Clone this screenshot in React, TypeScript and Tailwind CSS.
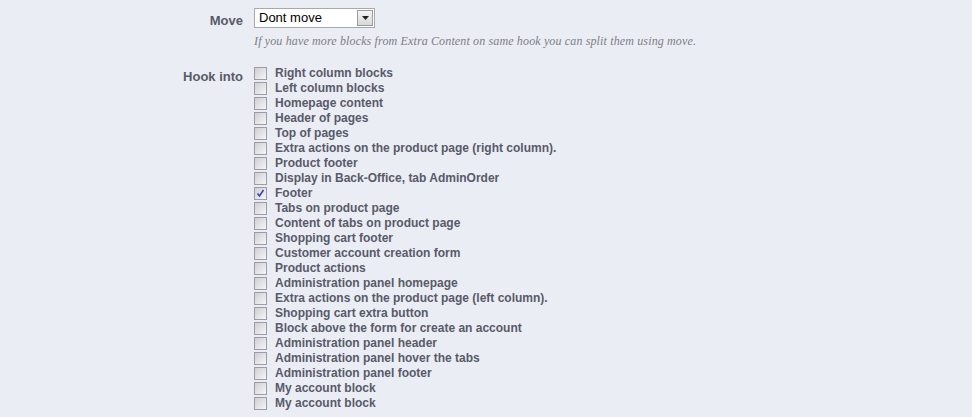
const hooks = [
  "Right column blocks",
  "Left column blocks",
  "Homepage content",
  "Header of pages",
  "Top of pages",
  "Extra actions on the product page (right column).",
  "Product footer",
  "Display in Back-Office, tab AdminOrder",
  "Footer",
  "Tabs on product page",
  "Content of tabs on product page",
  "Shopping cart footer",
  "Customer account creation form",
  "Product actions",
  "Administration panel homepage",
  "Extra actions on the product page (left column).",
  "Shopping cart extra button",
  "Block above the form for create an account",
  "Administration panel header",
  "Administration panel hover the tabs",
  "Administration panel footer",
  "My account block",
  "My account block",
];

const Box = ({ checked }: { checked: boolean }) => (
  <span className="w-[13px] h-[13px] border border-[#9c9ca6] bg-gradient-to-br from-[#cfcfd4] to-[#f6f6f6] flex items-center justify-center shrink-0">
    {checked && (
      <svg width="9" height="9" viewBox="0 0 9 9">
        <path d="M1.5 4.5 L3.5 7 L7.5 1" stroke="#3a3ab8" strokeWidth="1.5" fill="none" />
      </svg>
    )}
  </span>
);

export default function App() {
  return (
    <div className="w-[972px] h-[417px] bg-[#ebedf4] font-['Liberation_Sans',Arial,sans-serif] text-[#585a69] overflow-hidden">
      <div className="flex pt-2">
        <div className="w-[243px] text-right font-bold text-[13px] leading-5 pt-[3px]">Move</div>
        <div className="ml-[11px]">
          <div className="w-[121px] h-[20px] border border-[#a8a8b0] bg-white flex items-center justify-between pl-[4px] pr-[1px]">
            <span className="text-[13px] text-black leading-4">Dont move</span>
            <span className="w-[16px] h-[16px] border border-[#9a9aa0] bg-gradient-to-b from-[#f4f4f4] to-[#d8d8d8] flex items-center justify-center">
              <svg width="7" height="4" viewBox="0 0 7 4"><path d="M0 0 H7 L3.5 4 Z" fill="#222" /></svg>
            </span>
          </div>
          <p className="mt-[5px] italic text-[12px] leading-4 tracking-[0.14px] text-[#7d7d86] font-['Liberation_Serif',Georgia,serif]">
            If you have more blocks from Extra Content on same hook you can split them using move.
          </p>
        </div>
      </div>
      <div className="flex mt-[17px]">
        <div className="w-[243px] text-right font-bold text-[13px] leading-4 pt-[3px]">Hook into</div>
        <div className="ml-[11px] flex flex-col">
          {hooks.map((h, i) => (
            <label key={i} className="flex items-center h-[15px] gap-[8px]">
              <Box checked={h === "Footer"} />
              <span className="font-bold text-[12px] leading-[15px]">{h}</span>
            </label>
          ))}
        </div>
      </div>
    </div>
  );
}
